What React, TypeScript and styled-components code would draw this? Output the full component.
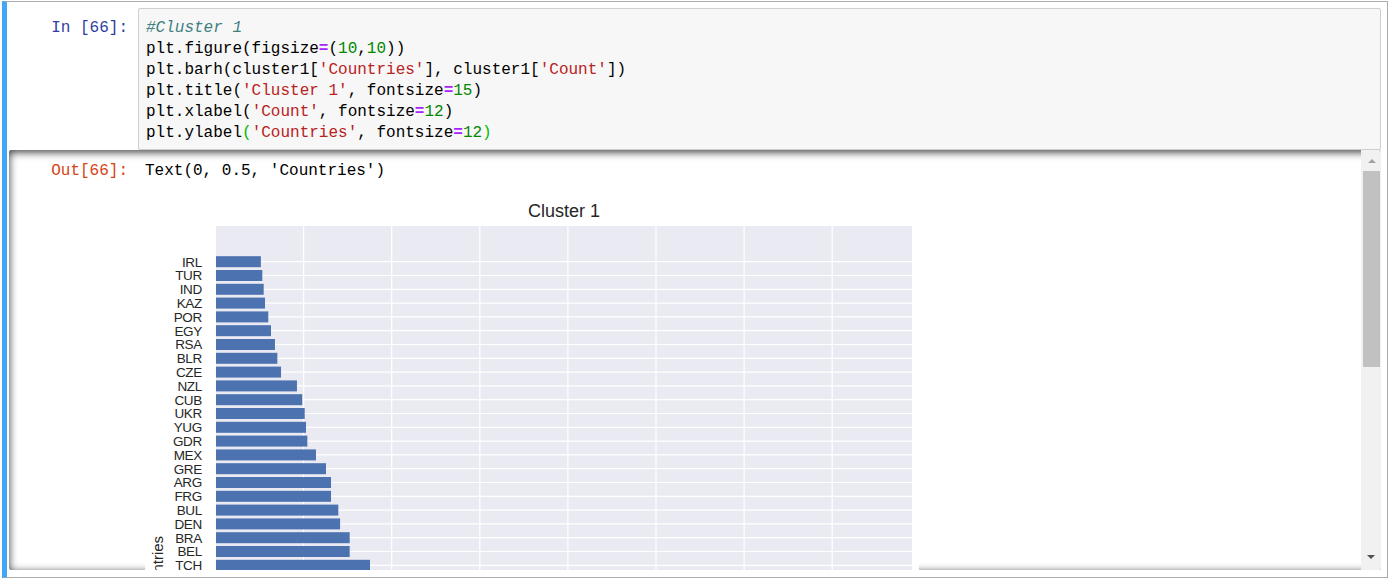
import React from 'react';
import styled, { createGlobalStyle } from 'styled-components';

const mono = `'Liberation Mono', 'DejaVu Sans Mono', monospace`;

const GlobalStyle = createGlobalStyle`
  html, body {
    margin: 0;
    padding: 0;
    background: #fff;
  }
  body {
    font-family: 'Liberation Sans', Arial, sans-serif;
  }
`;

const Cell = styled.div`
  box-sizing: border-box;
  width: 1386px;
  height: 577px;
  margin: 1px 0 0 2px;
  border: 1px solid #ababab;
  border-left: 5px solid #42a5f5;
  padding: 6px 6px 7px 2px;
  display: flex;
  flex-direction: column;
`;

const Row = styled.div`
  display: flex;
  align-items: flex-start;
`;

const Prompt = styled.div<{ $kind: 'in' | 'out' | 'none' }>`
  box-sizing: border-box;
  width: 129px;
  flex-shrink: 0;
  padding: ${p => (p.$kind === 'out' ? '11px' : '10px')} 10px 0 0;
  text-align: right;
  font: 16px/21px ${mono};
  white-space: pre;
  color: ${p => (p.$kind === 'in' ? '#303f9f' : '#d84315')};
`;

const CodeBox = styled.div`
  flex: 1;
  background: #f7f7f7;
  border: 1px solid #cfcfcf;
  border-radius: 2px;
  padding: 9px 6px 5px 7px;
  font: 16px/21px ${mono};
  color: #000;
  white-space: pre;
`;

const Comment = styled.span`
  color: #408080;
  font-style: italic;
`;

const Op = styled.span`
  color: #aa22ff;
  font-weight: bold;
`;

const Num = styled.span`
  color: #008800;
`;

const Str = styled.span`
  color: #ba2121;
`;

const Match = styled.span`
  color: #00bb00;
`;

const OutputScroll = styled.div`
  height: 420px;
  display: flex;
  border-radius: 2px;
  box-shadow: inset 0 2px 8px rgba(0, 0, 0, 0.8);
  overflow: hidden;
`;

const OutputBody = styled.div`
  flex: 1;
  min-width: 0;
  overflow: hidden;
  display: flex;
  flex-direction: column;
`;

const OutputText = styled.div`
  padding: 11px 0 0 7px;
  font: 16px/21px ${mono};
  color: #000;
  white-space: pre;
`;

const FigureRow = styled(Row)`
  margin-top: 4px;
`;

const FigureWrap = styled.div`
  padding-left: 7px;
`;

const Figure = styled.svg`
  display: block;
  background: #fff;
  font-family: 'Liberation Sans', Arial, sans-serif;

  text {
    fill: #262626;
  }
`;

const Scrollbar = styled.div`
  width: 20px;
  flex-shrink: 0;
  background: #f1f1f1;
  display: flex;
  flex-direction: column;
`;

const ScrollButton = styled.div<{ $dir: 'up' | 'down' }>`
  box-sizing: border-box;
  height: 20px;
  display: flex;
  align-items: center;
  justify-content: center;
  padding: ${p => (p.$dir === 'up' ? '2px 0 0 1px' : '0 0 7px 0')};
  color: ${p => (p.$dir === 'up' ? '#a3a3a3' : '#505050')};
`;

const Track = styled.div`
  flex: 1;
  padding-top: 1px;
`;

const Thumb = styled.div`
  height: 196px;
  margin: 0 1px 0 2px;
  background: #c1c1c1;
`;

const countries: [string, number][] = [
  ['IRL', 51], ['TUR', 52.6], ['IND', 54.2], ['KAZ', 55.7], ['POR', 59.4],
  ['EGY', 62.5], ['RSA', 67], ['BLR', 69.7], ['CZE', 73.9], ['NZL', 92],
  ['CUB', 98], ['UKR', 100.8], ['YUG', 102.3], ['GDR', 103.8], ['MEX', 113.6],
  ['GRE', 125], ['ARG', 130.7], ['FRG', 130.7], ['BUL', 139], ['DEN', 141],
  ['BRA', 151.9], ['BEL', 151.9], ['TCH', 175],
];

// plot geometry, in figure pixels
const LEFT = 71;
const TOP = 40;
const PLOT_W = 696;
const PLOT_H = 700;
const ROW0 = 75.7;
const PITCH = 13.8;
const BAR_H = 11;
const PX = 0.88;
const TICK = 88.1;

const Arrow = ({ dir }: { dir: 'up' | 'down' }) => (
  <svg width="8" height="4" viewBox="0 0 8 4">
    <polygon points={dir === 'up' ? '0,4 4,0 8,4' : '0,0 8,0 4,4'} fill="currentColor" />
  </svg>
);

const BarChart = () => (
  <Figure width={774} height={760} viewBox="0 0 774 760">
    <text x={LEFT + PLOT_W / 2} y={31} textAnchor="middle" fontSize={18}>
      Cluster 1
    </text>
    <rect x={LEFT} y={TOP} width={PLOT_W} height={PLOT_H} fill="#eaeaf2" />
    {[1, 2, 3, 4, 5, 6, 7].map(k => (
      <line key={k} x1={70.5 + k * TICK} x2={70.5 + k * TICK} y1={TOP} y2={TOP + PLOT_H} stroke="#fff" strokeWidth={1.2} />
    ))}
    {countries.map((_, i) => (
      <line key={i} x1={LEFT} x2={LEFT + PLOT_W} y1={ROW0 + i * PITCH} y2={ROW0 + i * PITCH} stroke="#fff" strokeWidth={1.2} />
    ))}
    {countries.map(([name, value], i) => (
      <g key={name}>
        <rect x={LEFT} y={ROW0 + i * PITCH - BAR_H / 2} width={value * PX} height={BAR_H} fill="#4c72b0" />
        <text x={57} y={ROW0 + i * PITCH + 4.8} textAnchor="end" fontSize={13.5} letterSpacing={-0.3}>
          {name}
        </text>
      </g>
    ))}
    <text transform="translate(18 382) rotate(-90)" textAnchor="middle" fontSize={15}>
      Countries
    </text>
  </Figure>
);

export default function App() {
  return (
    <>
      <GlobalStyle />
      <Cell>
        <Row>
          <Prompt $kind="in">In [66]:</Prompt>
          <CodeBox>
            <Comment>#Cluster 1</Comment>
            {'\n'}plt.figure(figsize<Op>=</Op>(<Num>10</Num>,<Num>10</Num>))
            {'\n'}plt.barh(cluster1[<Str>'Countries'</Str>], cluster1[<Str>'Count'</Str>])
            {'\n'}plt.title(<Str>'Cluster 1'</Str>, fontsize<Op>=</Op><Num>15</Num>)
            {'\n'}plt.xlabel(<Str>'Count'</Str>, fontsize<Op>=</Op><Num>12</Num>)
            {'\n'}plt.ylabel<Match>(</Match><Str>'Countries'</Str>, fontsize<Op>=</Op><Num>12</Num><Match>)</Match>
          </CodeBox>
        </Row>
        <OutputScroll>
          <OutputBody>
            <Row>
              <Prompt $kind="out">Out[66]:</Prompt>
              <OutputText>Text(0, 0.5, 'Countries')</OutputText>
            </Row>
            <FigureRow>
              <Prompt $kind="none" />
              <FigureWrap>
                <BarChart />
              </FigureWrap>
            </FigureRow>
          </OutputBody>
          <Scrollbar>
            <ScrollButton $dir="up">
              <Arrow dir="up" />
            </ScrollButton>
            <Track>
              <Thumb />
            </Track>
            <ScrollButton $dir="down">
              <Arrow dir="down" />
            </ScrollButton>
          </Scrollbar>
        </OutputScroll>
      </Cell>
    </>
  );
}
